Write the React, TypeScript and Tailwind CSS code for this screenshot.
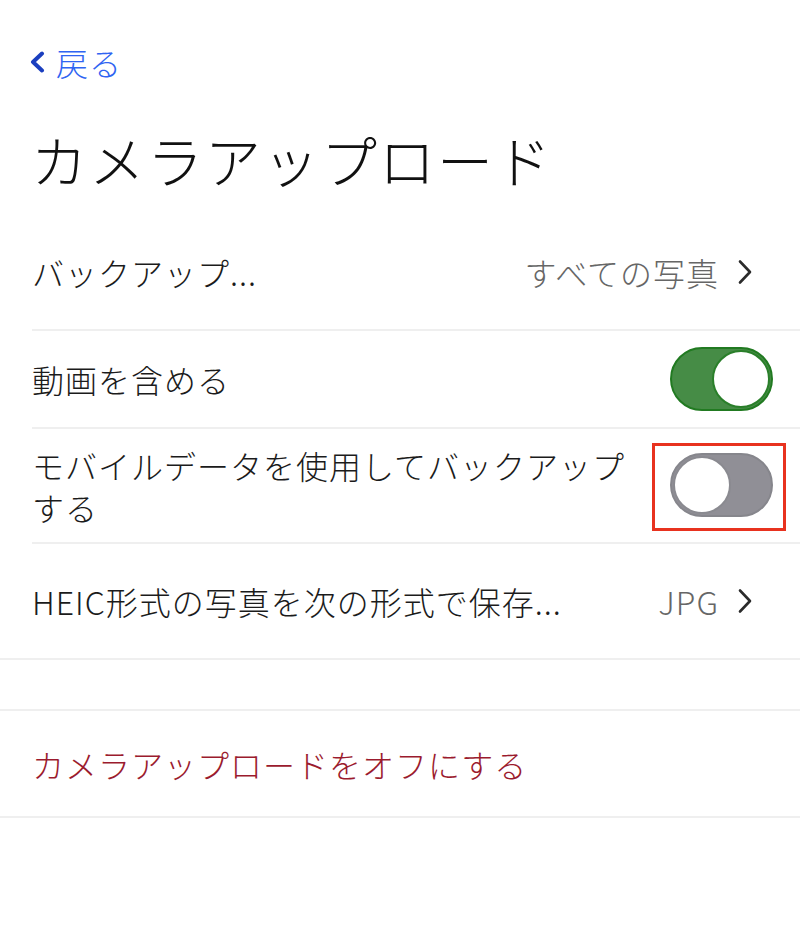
import React from "react";

const font = "font-['Noto_Sans_CJK_JP','Noto_Sans',sans-serif]";

function Chevron() {
  return (
    <svg width="16" height="26" viewBox="0 0 16 26" fill="none" className="ml-[18px]">
      <path d="M3 2.5 L13 13 L3 23.5" stroke="#2b2b2b" strokeWidth="2.6" strokeLinecap="round" strokeLinejoin="round" />
    </svg>
  );
}

function Toggle({ on }: { on: boolean }) {
  if (on) {
    return (
      <div className="flex h-[64px] w-[103px] items-center justify-end rounded-full border-2 border-[#217a21] bg-[#468c46] pr-[1px]">
        <div className="h-[58px] w-[58px] rounded-full border-2 border-[#2a7f2a] bg-white" />
      </div>
    );
  }
  return (
    <div className="flex h-[64px] w-[103px] items-center justify-start rounded-full border-2 border-[#86868c] bg-[#908f96] pl-[1px]">
      <div className="h-[58px] w-[58px] rounded-full border-2 border-[#8a8a90] bg-white" />
    </div>
  );
}

export default function App() {
  return (
    <div className={`h-[936px] w-[800px] bg-white font-light text-[#1b1b1b] ${font}`}>
      {/* back */}
      <div className="mt-[44px] flex h-[36px] items-center pl-[29px]">
        <svg width="18" height="22" viewBox="0 0 18 22" fill="none">
          <path d="M13 2.5 L4 11 L13 19.5" stroke="#1b3fbf" strokeWidth="4" strokeLinecap="round" strokeLinejoin="round" />
        </svg>
        <span className="ml-[9px] text-[32px] leading-none tracking-[1px] text-[#2f64f2]">戻る</span>
      </div>

      {/* title */}
      <h1 className="mt-[39px] h-[80px] pl-[31px] text-[56px] font-light leading-[80px] tracking-[2px] text-[#111]">
        カメラアップロード
      </h1>

      {/* list */}
      <div className="mt-[15px] text-[32px] leading-[42px] tracking-[1px]">
        <div className="ml-[32px] flex h-[117px] items-center justify-between border-b-2 border-[#efefef] pr-[47px]">
          <span>バックアップ...</span>
          <div className="flex items-center">
            <span className="text-[#666]">すべての写真</span>
            <Chevron />
          </div>
        </div>

        <div className="ml-[32px] flex h-[98px] items-center justify-between border-b-2 border-[#efefef] pr-[27px]">
          <span>動画を含める</span>
          <Toggle on />
        </div>

        <div className="ml-[32px] flex h-[115px] items-center justify-between border-b-2 border-[#efefef] pr-[14px]">
          <span className="w-[600px]">モバイルデータを使用してバックアップする</span>
          <div className="mt-[3px] border-[3px] border-[#e8321f] pb-[11px] pl-[15px] pr-[10px] pt-[7px]">
            <Toggle on={false} />
          </div>
        </div>

        <div className="flex h-[116px] items-center justify-between border-b-2 border-[#efefef] pl-[32px] pr-[47px]">
          <span>HEIC形式の写真を次の形式で保存...</span>
          <div className="flex items-center">
            <span className="text-[#666]">JPG</span>
            <Chevron />
          </div>
        </div>

        <div className="mt-[49px] flex h-[109px] items-center border-y-2 border-[#efefef] pl-[32px]">
          <span className="text-[#9b1b2e]">カメラアップロードをオフにする</span>
        </div>
      </div>
    </div>
  );
}
